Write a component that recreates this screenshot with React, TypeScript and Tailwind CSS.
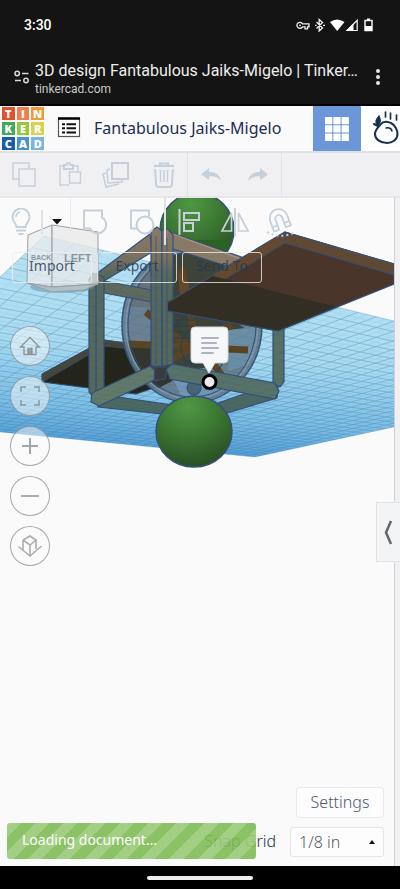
import React from "react";

const ICON = "#c6d0db";

type Pt = [number, number];

// Corners of the work plane in scene units: back, right, front, left.
const PLANE: Pt[] = [[44, 236], [625, 377], [255, 457], [-151, 417]];

// Maps the unit square on to the work plane in perspective.
function project(u: number, v: number): Pt {
  const [[x0, y0], [x1, y1], [x2, y2], [x3, y3]] = PLANE;
  const sx = x0 - x1 + x2 - x3;
  const sy = y0 - y1 + y2 - y3;
  const dx1 = x1 - x2, dx2 = x3 - x2, dy1 = y1 - y2, dy2 = y3 - y2;
  const den = dx1 * dy2 - dx2 * dy1;
  const g = (sx * dy2 - dx2 * sy) / den;
  const h = (dx1 * sy - sx * dy1) / den;
  const w = g * u + h * v + 1;
  return [
    ((x1 - x0 + g * x1) * u + (x3 - x0 + h * x3) * v + x0) / w,
    ((y1 - y0 + g * y1) * u + (y3 - y0 + h * y3) * v + y0) / w,
  ];
}

function gridPath(count: number): string {
  const seg = (a: Pt, b: Pt) => `M${a[0].toFixed(1)} ${a[1].toFixed(1)}L${b[0].toFixed(1)} ${b[1].toFixed(1)}`;
  let d = "";
  for (let i = 0; i <= count; i++) {
    const t = i / count;
    d += seg(project(t, 0), project(t, 1)) + seg(project(0, t), project(1, t));
  }
  return d;
}

const MINOR = gridPath(64);
const MAJOR = gridPath(32);

function Scene() {
  const edge = "#34507a";
  return (
    <svg viewBox="0 198 394 272" className="absolute left-0 top-0 h-auto w-full" aria-hidden="true">
      <defs>
        <linearGradient id="water" x1="20" y1="236" x2="0" y2="457" gradientUnits="userSpaceOnUse">
          <stop offset="0" stopColor="#b9e2f3" />
          <stop offset="0.45" stopColor="#aadbf1" />
          <stop offset="0.75" stopColor="#80c0e7" />
          <stop offset="1" stopColor="#4590d3" />
        </linearGradient>
        <radialGradient id="ball" cx="0.42" cy="0.15" r="0.9">
          <stop offset="0" stopColor="#4f9843" />
          <stop offset="0.5" stopColor="#3a7432" />
          <stop offset="1" stopColor="#284a22" />
        </radialGradient>
        <linearGradient id="post" x1="0" y1="228" x2="0" y2="300" gradientUnits="userSpaceOnUse">
          <stop offset="0" stopColor="#8b7a66" />
          <stop offset="0.45" stopColor="#78705f" />
          <stop offset="0.6" stopColor="#5a6960" />
          <stop offset="1" stopColor="#56685f" />
        </linearGradient>
        <clipPath id="planeClip"><polygon points="44,236 625,377 255,457 -151,417" /></clipPath>
        <clipPath id="wheelClip"><ellipse cx="192" cy="325" rx="66" ry="74" /></clipPath>
      </defs>

      <circle cx="197" cy="230" r="37" fill="url(#ball)" stroke={edge} strokeWidth="1.5" />
      <polygon points="44,236 625,377 255,457 -151,417" fill="url(#water)" />
      <path d={MINOR} stroke="#3d93c4" strokeWidth="0.5" opacity="0.18" />
      <path d={MAJOR} stroke="#2b7fb2" strokeWidth="0.6" opacity="0.28" />
      <path d="M163 240h68a37 37 0 0 1-10 18l-18 12-39-10z" fill="#2c6224" />

      {/* lower dark panel */}
      <polygon points="42,374 104,340 178,350 172,382 136,394 42,382" fill="#25261b" stroke={edge} />
      <polygon points="42,374 104,340 178,350 178,354 104,346 42,382" fill="#45483a" stroke={edge} strokeWidth="0.7" />

      {/* wheel */}
      <ellipse cx="192" cy="325" rx="70" ry="78" fill="#647a8b" fillOpacity="0.92" stroke="#34567f" strokeWidth="1.5" />
      <g clipPath="url(#wheelClip)">
        <rect x="120" y="245" width="145" height="62" fill="#68747c" />
        <path d="M120 345h70l-18 36-30 16-22-20z" fill="#34372f" />
        <path d="M165 250h60v65l30 20-20 25-60 15-18-40z" fill="#3e4439" />
        <path d="M228 330l35-4v35l-35 10z" fill="#6b8fa3" />
        <path d="M172 376h70l-20 30-40-8z" fill="#7197b3" />
        <g stroke="#5b4424" strokeWidth="7">
          <path d="M128 344l62 3M192 347l-52 32M196 347l-14-80M205 348l43 2M205 352l20 28M198 342l34-17M190 348l-44-36" />
        </g>
        <g stroke="#273f5c" strokeWidth="1" fill="none">
          <path d="M170 320h26M170 326h24M172 332h22M172 338h18M170 284l24 28" />
          <ellipse cx="197" cy="347" rx="16" ry="18" />
          <ellipse cx="197" cy="347" rx="29" ry="34" />
        </g>
        <path d="M178 270l10 12 4 20-12-4z" fill="#694a26" />
      </g>
      <ellipse cx="192" cy="325" rx="66" ry="74" fill="none" stroke="#7f98a8" strokeWidth="1.5" />
      <ellipse cx="192" cy="325" rx="64" ry="72" fill="none" stroke="#2f4e77" strokeWidth="1" />
      <circle cx="194" cy="388" r="7" fill="#496579" stroke="#314b6c" />

      {/* frame */}
      <g stroke={edge} strokeWidth="1.2" strokeLinejoin="round">
        <polygon points="104,281 152,290 152,302 104,293" fill="#5e6a5f" />
        <polygon points="150,234 96,274 104,281 152,252" fill="url(#post)" />
        <polygon points="170,232 250,260 236,269 170,248" fill="#8a7966" />
        <path d="M170 233l74 27" stroke="#a99580" />
        <polygon points="89,279 93,273 104,277 104,395 93,397 89,392" fill="#56695f" />
        <path d="M96 280v112" />
        <polygon points="97,394 172,405 172,415 98,407" fill="#4c6965" />
        <polygon points="92,393 150,366 157,372 154,380 99,406 91,402" fill="#617a6c" />
        <polygon points="218,403 255,390 278,386 277,398 224,414" fill="#4c6965" />
        <polygon points="273,328 284,328 284,382 280,387 273,384" fill="#567066" />
        <polygon points="166,369 172,364 275,383 279,391 275,399 170,379" fill="#57736b" />
        <polygon points="151,231 157,227 162,231 162,366 151,366" fill="url(#post)" />
        <polygon points="162,230 168,229 173,235 173,364 162,366" fill="url(#post)" />
        <path d="M156 236v128M167 238v126" strokeWidth="0.7" />
        <path d="M155 367h12l-2 12-11 2z" fill="#383e3c" />
      </g>

      {/* upper brown panel */}
      <polygon points="285,232 394,264 394,284 278,331 168,311 168,302" fill="#493529" stroke={edge} strokeWidth="1.2" />
      <polygon points="285,232 394,264 394,275 285,243" fill="#5f4934" stroke={edge} strokeWidth="1" />
      <polygon points="285,232 285,243 172,311 168,311 168,302" fill="#65492f" stroke={edge} strokeWidth="1" />
      <polygon points="213,276 337,307 278,331 168,311 168,303" fill="#332f23" />
      <path d="M168 311l110 20 59-24" fill="none" stroke={edge} strokeWidth="1.2" />

      <g clipPath="url(#planeClip)">
        <path d={MAJOR} stroke="#17364a" strokeWidth="0.5" opacity="0.14" />
      </g>

      <ellipse cx="194" cy="431.500" rx="38" ry="35.500" fill="url(#ball)" stroke={edge} strokeWidth="1.5" />

      {/* view cube */}
      <ellipse cx="62" cy="287" rx="32" ry="6" fill="#5f8ba2" opacity="0.5" />
      <g stroke="#9b9fa3" strokeWidth="1" strokeLinejoin="round">
        <polygon points="28,235 52,225 52,287 27,283" fill="#ececec" fillOpacity="0.72" />
        <polygon points="52,225 98,232 98,284 52,287" fill="#e9e9ea" fillOpacity="0.76" />
        <path d="M27 283l25 4 46-3-14 6-32 2z" fill="#b8c4c9" fillOpacity="0.8" />
      </g>
      <g fill="#8b979e" fontFamily="'Liberation Sans Narrow', 'Liberation Sans', Arial, sans-serif" fontWeight="700">
        <text x="31" y="260" fontSize="7">BACK</text>
        <text x="64" y="262" fontSize="11">LEFT</text>
      </g>

      {/* note pin */}
      <path d="M195 327h29a4 4 0 0 1 4 4v28a4 4 0 0 1-4 4h-9l-6 10-6-10h-8a4 4 0 0 1-4-4v-28a4 4 0 0 1 4-4z" fill="#f6f7f9" stroke="#d4d7dc" />
      <path d="M202 338h16M202 343h14M202 348h16M202 353h11" stroke="#b0b4be" strokeWidth="2" strokeLinecap="round" />
      <circle cx="209.500" cy="382" r="6.500" fill="#e9e9ee" stroke="#000" strokeWidth="3" />
    </svg>
  );
}

const LOGO: [string, string][] = [
  ["T", "bg-[#e4512f]"], ["I", "bg-[#ee7f4d]"], ["N", "bg-[#f19a3a]"],
  ["K", "bg-[#43a75c]"], ["E", "bg-[#94c83d]"], ["R", "bg-[#d8d34e]"],
  ["C", "bg-[#1c5dab]"], ["A", "bg-[#4b92c9]"], ["D", "bg-[#78b6dd]"],
];

function Logo() {
  return (
    <a href="#" aria-label="Tinkercad" className="ml-0.5 grid w-[42px] shrink-0 grid-cols-3 gap-0.5">
      {LOGO.map(([c, bg]) => (
        <span key={c} className={`flex h-[13px] items-center justify-center font-['Open_Sans',sans-serif] text-[11px] font-extrabold leading-none text-white ${bg}`}>
          {c}
        </span>
      ))}
    </a>
  );
}

function Tool({ label, className, children }: { label: string; className: string; children: React.ReactNode }) {
  return (
    <button type="button" aria-label={label} className={`flex shrink-0 items-center justify-center ${className}`}>
      {children}
    </button>
  );
}

function Glyph({ children, w = 26, h = 26 }: { children: React.ReactNode; w?: number; h?: number }) {
  return (
    <svg width={w} height={h} viewBox={`0 0 ${w} ${h}`} fill="none" stroke={ICON} strokeWidth="1.5">
      {children}
    </svg>
  );
}

function StatusBar() {
  return (
    <div className="flex h-[50px] items-center justify-between bg-[#141414] pl-6 pr-[26px] text-white">
      <span className="text-sm font-medium">3:30</span>
      <svg width="78" height="14" viewBox="0 0 78 14" fill="none" stroke="#f1f1f1" className="block">
        <path d="M6.500 5.800A3 3 0 1 0 6.500 8.800H9v2h2.500v-2H13v-3z" strokeWidth="1.300" />
        <circle cx="4" cy="7.300" r="0.900" fill="#f1f1f1" stroke="none" />
        <path d="M20.500 4l6 6-3.300 3V1.500l3.300 3-6 6M19 7.300h1.500M27 7.300h2" strokeWidth="1.300" />
        <path d="M34 4q7-5 14.500 0L41.200 13z" fill="#fff" stroke="none" />
        <path d="M61.200 2.300v10.200H51z" strokeWidth="1.200" />
        <path d="M50 13L57.500 5.500V13z" fill="#fff" stroke="none" />
        <path d="M69 2.500h7v10h-7z" strokeWidth="1.500" />
        <path d="M71 0.500h3v2h-3zM69 8h7v5h-7z" fill="#fff" stroke="none" />
      </svg>
    </div>
  );
}

function AddressBar() {
  return (
    <div className="flex h-14 items-center border-b-2 border-black bg-[#141414] pl-3.5 text-[#ededed]">
      <svg width="16" height="14" viewBox="0 0 16 14" fill="none" stroke="#d8d8d8" strokeWidth="1.500" className="shrink-0">
        <circle cx="3.200" cy="3.500" r="2.200" /><path d="M8 3.500h6.500M1 10.500h6" /><circle cx="12" cy="10.500" r="2.200" />
      </svg>
      <div className="ml-[5px] min-w-0 grow whitespace-nowrap pt-1">
        <p className="text-base leading-5">3D design Fantabulous Jaiks-Migelo | Tinker…</p>
        <p className="text-xs leading-4 text-[#c9c9c9]">tinkercad.com</p>
      </div>
      <button type="button" aria-label="More options" className="mr-5 flex flex-col gap-0.5">
        <span className="size-1 rounded-full bg-[#e6e6e6]" />
        <span className="size-1 rounded-full bg-[#e6e6e6]" />
        <span className="size-1 rounded-full bg-[#e6e6e6]" />
      </button>
    </div>
  );
}

function Header() {
  return (
    <header className="flex h-[47px] items-stretch overflow-hidden border-b-2 border-[#dde1e8] bg-[#fafafa]">
      <div className="flex items-center"><Logo /></div>
      <button type="button" aria-label="Designs" className="ml-[13px] flex items-center pb-0.5">
        <svg width="24" height="22" viewBox="0 0 24 22">
          <rect x="1.500" y="1.500" width="21" height="18" fill="#fff" stroke="#555" strokeWidth="1.200" />
          <path d="M1 1.500h22" stroke="#000" strokeWidth="2.500" />
          <path d="M5 7.200h3M5 11.200h3M5 15.400h3M9.500 7.200h9.500M9.500 11.200h9.500M9.500 15.400h9.500" stroke="#111" strokeWidth="2" />
        </svg>
      </button>
      <h1 className="ml-[13px] flex grow items-center whitespace-nowrap pb-0.5 text-base font-normal text-[#1e2d52]">Fantabulous Jaiks-Migelo</h1>
      <button type="button" aria-label="3D design" className="flex w-12 shrink-0 items-center justify-center bg-[#6b97d8]">
        <svg width="24" height="24" viewBox="0 0 24 24" fill="#fff">
          {[0, 8.3, 16.6].map((y) => [0, 8.3, 16.6].map((x) => <rect key={`${x}-${y}`} x={x} y={y} width="7.300" height="7.300" rx="0.500" />))}
        </svg>
      </button>
      <button type="button" aria-label="Blocks" className="flex w-[39px] shrink-0 items-center bg-white pb-1 pl-3">
        <svg width="26" height="36" viewBox="0 0 26 36" fill="none" stroke="#1b2f4e" strokeWidth="2" strokeLinecap="round" strokeLinejoin="round">
          <path d="M8 15C11 11 15 13 18 14C22 16 24.500 21 24.500 25C24.500 31 19 34 14 34C7 34 2 30 2 25C2 21 5 18 8 15z" />
          <path d="M13 19q5-1 6 3" strokeWidth="1.500" />
          <path d="M12.500 3v5M17.500 4v6M23.500 6v5" strokeWidth="1.700" />
          <path d="M6 7C2 10 2 15 5 17C8 14 8 10 6 7z" fill="#1b2f4e" strokeWidth="1" />
          <path d="M1 15l4 2" />
        </svg>
      </button>
    </header>
  );
}

function Toolbar() {
  return (
    <div className="flex h-[45px] items-stretch border-b-2 border-[#e6e6ea] bg-[#f0f0f3]">
      <Tool label="Copy" className="w-[47px]"><Glyph><rect x="2" y="1" width="16" height="16" /><rect x="8" y="7" width="16" height="17" fill="#f0f0f3" /></Glyph></Tool>
      <Tool label="Paste" className="w-[45px]"><Glyph><path d="M12 23H3V4h4M16 4h5v6" /><path d="M7 3h2.500a2 2 0 0 1 4 0H16v4H7z" strokeWidth="2" /><rect x="12.500" y="10" width="11" height="11" /></Glyph></Tool>
      <Tool label="Duplicate" className="w-12"><Glyph w={28}><rect x="10" y="1" width="16" height="16" strokeWidth="2" /><path d="M8 7l-3 1 1 13 14-1v-2" /><path d="M4 11l-3 1 3 13 13-3" /></Glyph></Tool>
      <Tool label="Delete" className="w-12 border-r border-[#e2e3e8]"><Glyph h={28}><path d="M3 5h20M9 5V2.500h8V5" strokeWidth="2" /><path d="M4 8l1 15q0 3 3 3h10q3 0 3-3l1-15" strokeWidth="2" /><path d="M9.500 9v12M13 9v12M16.500 9v12" /></Glyph></Tool>
      <Tool label="Undo" className="w-[46px]"><Glyph w={22} h={16}><path d="M9 1L1 7.500 9 13V9.500q7-1 12 4-2-9-12-8.500z" fill={ICON} stroke="none" /></Glyph></Tool>
      <Tool label="Redo" className="w-12 border-r border-[#e2e3e8]"><Glyph w={22} h={16}><path d="M13 1l8 6.500L13 13V9.500q-7-1-12 4 2-9 12-8.500z" fill={ICON} stroke="none" /></Glyph></Tool>
    </div>
  );
}

function ShapeTools() {
  return (
    <div className="flex h-[47px] items-center">
      <Tool label="Show tips" className="h-6 w-[43px] border-r-2 border-[#dfe3e8]">
        <Glyph h={28} w={22}><path d="M6.500 19c0-3-4-5-4-10a8.500 8.500 0 0 1 17 0c0 5-4 7-4 10z" strokeWidth="2" /><path d="M6 9q0-4 4-5" /><path d="M6 22.500h10M8.500 26h5" strokeWidth="2" /></Glyph>
      </Tool>
      <Tool label="Visibility" className="h-full w-7 border-r border-[#e9ebee]"><svg width="10" height="6" viewBox="0 0 10 6"><path d="M0 0h10L5 5.500z" fill="#111" /></svg></Tool>
      <Tool label="Group" className="w-12"><Glyph><path d="M20 8.500V1.500H2v18h6a8.500 8.500 0 1 0 12-11z" strokeWidth="2" /></Glyph></Tool>
      <Tool label="Ungroup" className="h-full w-[47px] border-r-2 border-[#dfe3e8]"><Glyph><path d="M8 19.500H2v-18h18v6" strokeWidth="2" /><circle cx="16" cy="16" r="8.500" strokeWidth="2" /></Glyph></Tool>
      <Tool label="Align" className="w-[46px]"><Glyph h={28}><path d="M3.500 1v26" strokeWidth="2" /><rect x="8" y="5" width="15" height="7" strokeWidth="2" /><rect x="8" y="15" width="9" height="8" strokeWidth="2" /></Glyph></Tool>
      <Tool label="Mirror" className="w-[46px]"><Glyph w={30} h={30}><path d="M11.500 6v18H2zM18.500 6v18H28z" strokeWidth="1.700" /><path d="M15 1v28" strokeWidth="2" /></Glyph></Tool>
      <Tool label="Snap to face" className="w-11">
        <Glyph w={28} h={30}>
          <g transform="rotate(-20 13 12)" strokeWidth="1.800"><path d="M4 22V11a9 9 0 0 1 18 0v11h-5.500V11.500a3.500 3.500 0 0 0-7 0V22z" /><path d="M4 17.500h5.500M16.500 17.500H22" /></g>
          <path d="M1 25q13 7 26 1" strokeDasharray="2 3" strokeWidth="2" />
        </Glyph>
      </Tool>
    </div>
  );
}

function FileButton({ children }: { children: string }) {
  return (
    <button type="button" className="h-[31px] w-20 rounded-[3px] border border-[#eceef1]/80 pb-1 text-sm font-normal text-[#26364f]/80">{children}</button>
  );
}

function RoundButton({ label, children }: { label: string; children: React.ReactNode }) {
  return (
    <button type="button" aria-label={label} className="flex size-10 items-center justify-center rounded-full border border-[#6f777c]/60 bg-[#fbfbfb]/50">
      <svg width="26" height="26" viewBox="0 0 26 26" fill="none" stroke="#8e9599" strokeWidth="1.300">{children}</svg>
    </button>
  );
}

function Workspace() {
  return (
    <main className="relative flex grow">
      <div className="relative flex min-w-0 grow flex-col overflow-hidden bg-[#fafafa]">
        <Scene />
        <div className="relative flex grow flex-col font-light">
          <ShapeTools />
          <div className="ml-3 mt-[7px] flex gap-[5px]">
            <FileButton>Import</FileButton>
            <FileButton>Export</FileButton>
            <FileButton>Send To</FileButton>
          </div>
          <nav aria-label="View controls" className="ml-2.5 mt-[43px] flex w-10 flex-col gap-2.5">
            <RoundButton label="Home view"><path d="M7 14H3.500L13 4.500l9.500 9.500H19v7.500h-4v-6h-1.300v6h-1.600v-6H11v6H7z" /></RoundButton>
            <RoundButton label="Fit view"><path d="M4 9V4h5M17 4h5v5M22 17v5h-5M9 22H4v-5" strokeWidth="1.500" /></RoundButton>
            <RoundButton label="Zoom in"><path d="M13 5v16M5 13h16" stroke="#a3a7a9" strokeWidth="2" /></RoundButton>
            <RoundButton label="Zoom out"><path d="M4 13h18" stroke="#adadad" strokeWidth="2" /></RoundButton>
            <RoundButton label="Orthographic view"><path d="M6 7l7-4 6 4v9M6 7v10M6 7l7 5 6-5M13 12v11M1.500 13.500L13 23l11.500-10" stroke="#adadad" strokeWidth="1.600" /></RoundButton>
          </nav>
          <div className="mt-auto flex flex-col items-end gap-[9px] pb-[9px] pr-2.5">
            <button type="button" className="h-[31px] w-[88px] rounded-[3px] border border-[#e8eaed] bg-[#fdfdfd] pb-0.5 text-base leading-5 text-[#4a5870]">Settings</button>
            <div className="flex items-center gap-3.5">
              <label htmlFor="snap" className="pb-0.5 text-base leading-5 text-[#1e2d52]">Snap Grid</label>
              <div className="relative">
                <select id="snap" className="block h-[30px] w-[94px] appearance-none rounded-[3px] border border-[#e4e6ea] bg-[#fdfdfd] pl-2 text-base text-[#555b60]">
                  <option>1/8 in</option>
                </select>
                <svg width="6" height="4" viewBox="0 0 6 4" className="pointer-events-none absolute right-[9px] top-[13px]"><path d="M0 4L3 0l3 4z" fill="#111" /></svg>
              </div>
            </div>
          </div>
        </div>
        <div role="status" className="absolute bottom-[7px] left-[7px] flex h-9 w-[249px] items-center rounded-[3px] bg-[repeating-linear-gradient(135deg,#9acb78_0_10px,#80bd57_10px_20px)] pb-0.5 pl-[15px] text-sm font-normal text-white opacity-90">
          Loading document…
        </div>
      </div>
      <aside className="w-1.5 shrink-0 border-l border-[#cfcfd5] bg-[#f0f0f3]" />
      <button type="button" aria-label="Open shapes panel" className="absolute right-0 top-[304px] flex h-[60px] w-6 items-center justify-center border border-r-0 border-[#e0e2e6] bg-[#f3f4f6]">
        <svg width="9" height="25" viewBox="0 0 9 25" fill="none"><path d="M7 1L2 12.500 7 24" stroke="#666" strokeWidth="2.500" /></svg>
      </button>
    </main>
  );
}

export default function App() {
  return (
    <div className="flex min-h-screen flex-col bg-[#fafafa] font-['Noto_Sans',sans-serif]">
      <div className="font-['Roboto',sans-serif]">
        <StatusBar />
        <AddressBar />
      </div>
      <Header />
      <Toolbar />
      <Workspace />
      <footer className="flex h-[23px] items-center justify-center bg-black">
        <span className="h-1 w-[106px] rounded-full bg-[#ececec]" />
      </footer>
    </div>
  );
}
